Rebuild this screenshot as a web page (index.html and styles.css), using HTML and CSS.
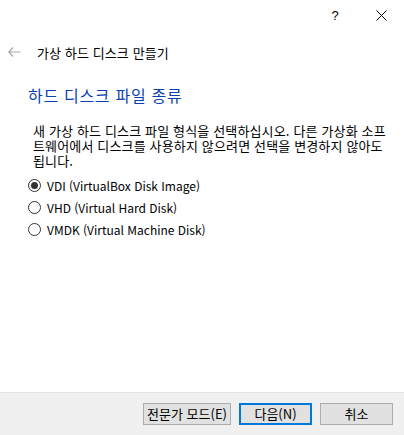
FILE: index.html
```html
<!DOCTYPE html>
<html lang="ko">
<head>
<meta charset="utf-8">
<link rel="stylesheet" href="styles.css">
</head>
<body>
<div class="window">
  <div class="titlebar">
    <span class="tb-btn help">?</span>
    <span class="tb-btn close">
      <svg width="11" height="11" viewBox="0 0 11 11"><path d="M0.5 0.5 L10.5 10.5 M10.5 0.5 L0.5 10.5" stroke="#000" stroke-width="1" fill="none"/></svg>
    </span>
  </div>
  <div class="navbar">
    <svg class="back" width="13" height="10" viewBox="0 0 13 10"><path d="M5 0.5 L0.8 5 L5 9.5 M0.8 5 H12.5" stroke="#a8a8a8" stroke-width="1.2" fill="none"/></svg>
    <span class="nav-title">가상 하드 디스크 만들기</span>
  </div>
  <div class="content">
    <h1 class="heading">하드 디스크 파일 종류</h1>
    <p class="desc">새 가상 하드 디스크 파일 형식을 선택하십시오. 다른 가상화 소프트웨어에서 디스크를 사용하지 않으려면 선택을 변경하지 않아도 됩니다.</p>
    <div class="options">
      <label class="opt"><span class="radio checked"></span><span>VDI (VirtualBox Disk Image)</span></label>
      <label class="opt"><span class="radio"></span><span>VHD (Virtual Hard Disk)</span></label>
      <label class="opt"><span class="radio"></span><span>VMDK (Virtual Machine Disk)</span></label>
    </div>
  </div>
  <div class="footer">
    <button class="btn expert">전문가 모드(E)</button>
    <button class="btn primary">다음(N)</button>
    <button class="btn cancel">취소</button>
  </div>
</div>
</body>
</html>
```
FILE: styles.css
```css
* { box-sizing: border-box; }
html, body { margin: 0; padding: 0; }
body {
  width: 404px;
  height: 435px;
  background: #fff;
  font-family: "Noto Sans CJK KR", "Noto Sans", sans-serif;
  font-size: 13px;
  color: #000;
  overflow: hidden;
}
.window {
  display: flex;
  flex-direction: column;
  height: 435px;
}
.titlebar {
  height: 31px;
  display: flex;
  justify-content: flex-end;
  align-items: center;
}
.tb-btn {
  width: 46px;
  height: 31px;
  display: flex;
  align-items: center;
  justify-content: center;
}
.help { font-family: "Liberation Sans", sans-serif; font-size: 13px; }
.navbar {
  height: 42px;
  display: flex;
  align-items: center;
  padding-left: 8px;
}
.back { margin-right: 16px; }
.nav-title { font-size: 13px; letter-spacing: 0.1px; }
.content {
  flex: 1;
  padding-left: 28px;
}
.heading {
  margin: 11px 0 0 0;
  font-size: 16px;
  font-weight: normal;
  color: #0a3fb4;
  line-height: 22px;
  letter-spacing: 0.7px;
}
.desc {
  margin: 17px 0 0 5px;
  width: 353px;
  line-height: 15px;
  letter-spacing: 0.15px;
}
.options {
  margin-top: 6px;
  display: flex;
  flex-direction: column;
  font-size: 12px;
}
.opt {
  height: 22px;
  display: flex;
  align-items: center;
}
.radio {
  width: 13px;
  height: 13px;
  border: 1px solid #333;
  border-radius: 50%;
  margin-right: 6px;
  display: flex;
  align-items: center;
  justify-content: center;
}
.radio.checked::after {
  content: "";
  width: 7px;
  height: 7px;
  border-radius: 50%;
  background: #333;
}
.footer {
  height: 43px;
  background: #f0f0f0;
  border-top: 1px solid #e3e3e3;
  display: flex;
  justify-content: flex-end;
  align-items: flex-start;
  padding: 10px 11px 0 0;
  gap: 8px;
}
.btn {
  height: 22px;
  background: #e1e1e1;
  border: 1px solid #adadad;
  font-family: "Noto Sans CJK KR", "Noto Sans", sans-serif;
  font-size: 13px;
  padding: 0;
  color: #000;
  line-height: 18px;
}
.expert { width: 88px; }
.primary { width: 73px; border: 2px solid #0078d7; }
.cancel { width: 73px; }
```
